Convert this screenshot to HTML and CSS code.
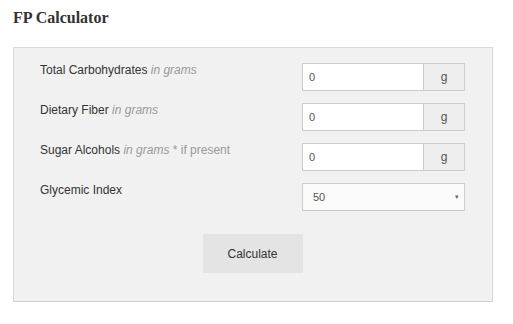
FILE: index.html
```html
<!DOCTYPE html>
<html lang="en">
<head>
    <meta charset="UTF-8">
    <meta name="viewport" content="width=device-width, initial-scale=1.0">
    <link rel="stylesheet" href="styles.css">
    <title>FP Calculator</title>
</head>
<body>
    <div class="page">
        <h2 class="title">FP Calculator</h2>
        <div class="panel">
            <div class="rows">
                <label class="label">Total Carbohydrates <em>in grams</em></label>
                <div class="group">
                    <input type="text" class="field" value="0">
                    <span class="addon">g</span>
                </div>

                <label class="label">Dietary Fiber <em>in grams</em></label>
                <div class="group">
                    <input type="text" class="field" value="0">
                    <span class="addon">g</span>
                </div>

                <label class="label">Sugar Alcohols <em>in grams</em> <span class="note">* if present</span></label>
                <div class="group">
                    <input type="text" class="field" value="0">
                    <span class="addon">g</span>
                </div>

                <label class="label">Glycemic Index</label>
                <div class="select">
                    <span>50</span>
                    <span class="caret">&#9662;</span>
                </div>
            </div>
            <div class="button">Calculate</div>
        </div>
    </div>
</body>
</html>
```

FILE: styles.css
```css
body{
    margin: 0;
    background: #fff;
    font-family: "Liberation Sans", Arial, sans-serif;
    color: #333;
}
.page{
    padding: 8px 21px 0 13px;
}
.title{
    margin: 0;
    font-family: "Liberation Serif", Georgia, serif;
    font-size: 16px;
    line-height: 20px;
    font-weight: bold;
    color: #333;
}
.panel{
    margin-top: 19px;
    width: 480px;
    box-sizing: border-box;
    background: #f1f1f1;
    border: 1px solid #dadada;
    border-bottom-color: #cfcfcf;
    padding: 15px 27px 28px 26px;
}
.rows{
    display: grid;
    grid-template-columns: 1fr 163px;
    grid-auto-rows: 28px;
    row-gap: 12px;
}
.label{
    font-size: 12px;
    line-height: 14px;
    color: #333;
}
.label em{
    color: #999;
}
.label .note{
    color: #999;
}
.group{
    display: flex;
    height: 28px;
}
.field{
    width: 122px;
    height: 28px;
    box-sizing: border-box;
    margin: 0;
    border: 1px solid #ccc;
    background: #fff;
    padding: 0 6px;
    font-family: "Liberation Sans", Arial, sans-serif;
    font-size: 11px;
    color: #555;
    outline: none;
}
.addon{
    flex: 1;
    display: flex;
    align-items: center;
    justify-content: center;
    border: 1px solid #ccc;
    border-left: none;
    background: #eee;
    font-size: 12px;
    color: #555;
}
.select{
    height: 28px;
    box-sizing: border-box;
    border: 1px solid #ccc;
    background: #fafafa;
    display: flex;
    align-items: center;
    justify-content: space-between;
    padding: 0 5px 0 10px;
    font-size: 11px;
    color: #555;
}
.caret{
    font-size: 7px;
    color: #666;
}
.button{
    margin: 23px auto 0;
    width: 100px;
    height: 39px;
    background: #e4e4e4;
    display: flex;
    align-items: center;
    justify-content: center;
    font-size: 12px;
    color: #333;
}
```
